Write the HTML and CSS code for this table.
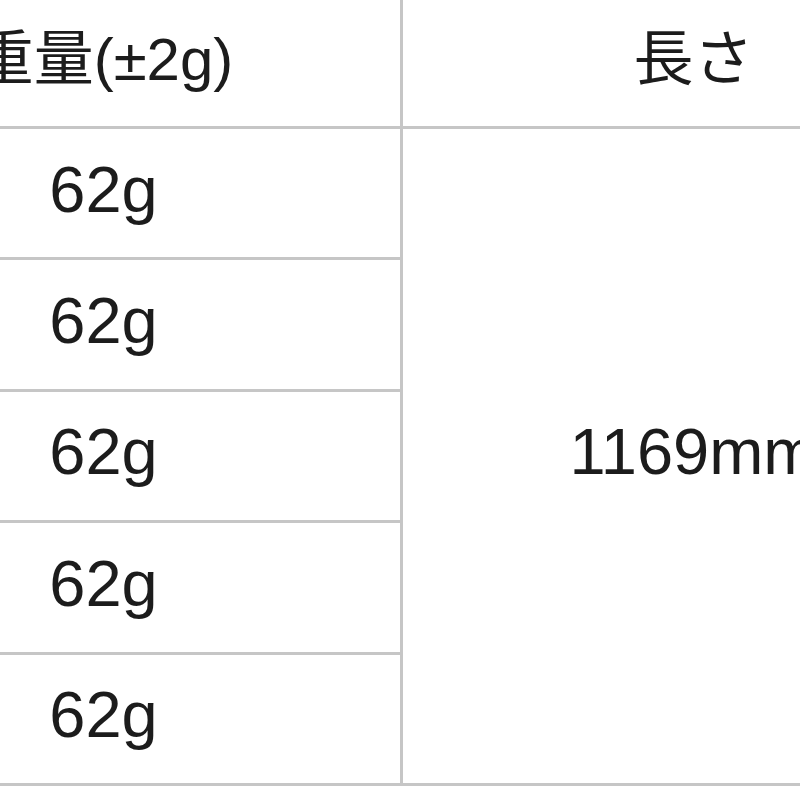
FILE: index.html
```html
<!DOCTYPE html>
<html lang="ja">
<head>
<meta charset="utf-8">
<link rel="stylesheet" href="styles.css">
</head>
<body>
<div class="viewport">
  <table class="spec">
    <colgroup>
      <col class="col-weight">
      <col class="col-length">
    </colgroup>
    <thead>
      <tr>
        <th>重量(±2g)</th>
        <th>長さ</th>
      </tr>
    </thead>
    <tbody>
      <tr><td>62g</td><td rowspan="5">1169mm</td></tr>
      <tr><td>62g</td></tr>
      <tr><td>62g</td></tr>
      <tr><td>62g</td></tr>
      <tr><td>62g</td></tr>
    </tbody>
  </table>
</div>
</body>
</html>
```

FILE: styles.css
```css
html, body {
  margin: 0;
  padding: 0;
  background: #ffffff;
  overflow: hidden;
}

.viewport {
  width: 800px;
  height: 800px;
  overflow: hidden;
}

.spec {
  border-collapse: collapse;
  width: 1180px;
  min-width: 1180px;
  margin-left: -196px;
  margin-top: -6px;
  font-family: "Liberation Sans", "Noto Sans CJK JP", sans-serif;
  color: #1c1c1c;
  table-layout: fixed;
}

.col-weight {
  width: 596px;
}

.col-length {
  width: 584px;
}

.spec th,
.spec td {
  border: 3px solid #c6c6c6;
  padding: 0;
  text-align: center;
  vertical-align: middle;
  font-weight: normal;
}

.spec th {
  box-sizing: border-box;
  height: 132px;
  padding-bottom: 16px;
  font-size: 60px;
}

.spec td {
  box-sizing: border-box;
  height: 131.4px;
  padding-bottom: 8px;
  font-size: 65px;
}
```
